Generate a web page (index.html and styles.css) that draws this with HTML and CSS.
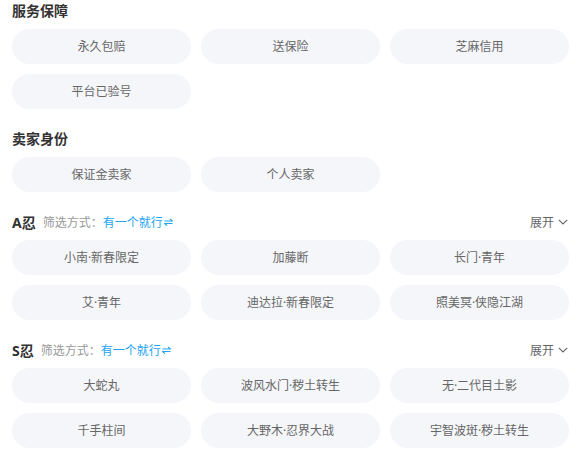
FILE: index.html
```html
<!DOCTYPE html>
<html lang="zh">
<head>
<meta charset="utf-8">
<link rel="stylesheet" href="styles.css">
</head>
<body>
<div class="page">
  <section class="section">
    <h2 class="title">服务保障</h2>
    <div class="grid">
      <div class="pill">永久包赔</div>
      <div class="pill">送保险</div>
      <div class="pill">芝麻信用</div>
      <div class="pill">平台已验号</div>
    </div>
  </section>
  <section class="section">
    <h2 class="title">卖家身份</h2>
    <div class="grid">
      <div class="pill">保证金卖家</div>
      <div class="pill">个人卖家</div>
    </div>
  </section>
  <section class="section">
    <div class="bar">
      <div class="bar-left">
        <span class="rank">A忍</span>
        <span class="mode-label">筛选方式：</span>
        <span class="mode">有一个就行<svg class="swap" width="9" height="8" viewBox="0 0 9 8"><path d="M0.5 3H8.5L6 0.8M8.5 5.5H0.5L3 7.7" fill="none" stroke="#22a3f2" stroke-width="1.1"/></svg></span>
      </div>
      <div class="expand">展开<svg class="chev" width="10" height="6" viewBox="0 0 10 6"><polyline points="0.8,0.8 5,5 9.2,0.8" fill="none" stroke="#666" stroke-width="1.1"/></svg></div>
    </div>
    <div class="grid">
      <div class="pill">小南·新春限定</div>
      <div class="pill">加藤断</div>
      <div class="pill">长门·青年</div>
      <div class="pill">艾·青年</div>
      <div class="pill">迪达拉·新春限定</div>
      <div class="pill">照美冥·侠隐江湖</div>
    </div>
  </section>
  <section class="section">
    <div class="bar">
      <div class="bar-left">
        <span class="rank">S忍</span>
        <span class="mode-label">筛选方式：</span>
        <span class="mode">有一个就行<svg class="swap" width="9" height="8" viewBox="0 0 9 8"><path d="M0.5 3H8.5L6 0.8M8.5 5.5H0.5L3 7.7" fill="none" stroke="#22a3f2" stroke-width="1.1"/></svg></span>
      </div>
      <div class="expand">展开<svg class="chev" width="10" height="6" viewBox="0 0 10 6"><polyline points="0.8,0.8 5,5 9.2,0.8" fill="none" stroke="#666" stroke-width="1.1"/></svg></div>
    </div>
    <div class="grid">
      <div class="pill">大蛇丸</div>
      <div class="pill">波风水门·秽土转生</div>
      <div class="pill">无·二代目土影</div>
      <div class="pill">千手柱间</div>
      <div class="pill">大野木·忍界大战</div>
      <div class="pill">宇智波斑·秽土转生</div>
    </div>
  </section>
</div>
</body>
</html>
```

FILE: styles.css
```css
* { box-sizing: border-box; }
html, body {
  margin: 0;
  padding: 0;
  background: #ffffff;
}
body {
  font-family: "Noto Sans", "Noto Sans CJK SC", sans-serif;
  color: #333;
}
.page {
  padding: 0 10px 0 12px;
}
.section {
  margin-bottom: 19px;
}
.title {
  margin: 0 0 7px;
  font-size: 14px;
  line-height: 22px;
  font-weight: 700;
  color: #333;
}
.grid {
  display: grid;
  grid-template-columns: repeat(3, 179px);
  column-gap: 10px;
  row-gap: 10px;
}
.pill {
  height: 35px;
  line-height: 35px;
  border-radius: 18px;
  background: #f5f6fa;
  color: #666;
  font-size: 12px;
  text-align: center;
  white-space: nowrap;
}
.bar {
  display: flex;
  justify-content: space-between;
  align-items: center;
  height: 22px;
  margin-bottom: 7px;
}
.bar-left {
  display: flex;
  align-items: center;
}
.rank {
  font-size: 14px;
  font-weight: 700;
  color: #333;
  margin-right: 7px;
}
.mode-label {
  font-size: 12px;
  color: #999;
}
.mode {
  font-size: 12px;
  color: #22a3f2;
  display: flex;
  align-items: center;
}
.swap {
  margin-left: 1px;
}
.expand {
  display: flex;
  align-items: center;
  font-size: 12px;
  color: #666;
}
.chev {
  margin-left: 4px;
  margin-right: 1px;
}
```
